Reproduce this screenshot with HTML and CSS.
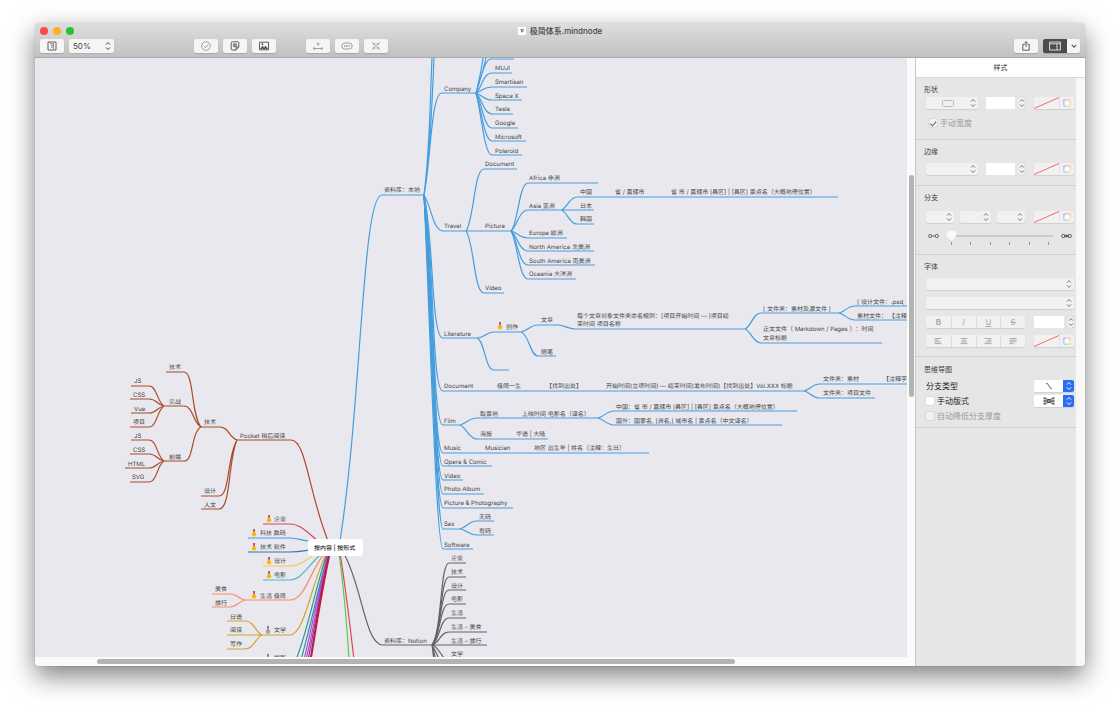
FILE: index.html
```html
<!DOCTYPE html>
<html lang="zh-CN">
<head>
<meta charset="utf-8">
<meta name="viewport" content="width=device-width, initial-scale=1">
<title>极简体系.mindnode</title>
<link rel="stylesheet" href="styles.css">
</head>
<body>
<svg class="defs" aria-hidden="true">
  <symbol id="updown" viewBox="0 0 6 10"><path d="M1 3.6 3 1.5l2 2.1M1 6.4l2 2.1 2-2.1"/></symbol>
  <symbol id="medal" viewBox="0 0 6 8"><path d="M1.900 0h2.200L3.800 3H2.200z" fill="#8d5aa8"/><path d="M2.600 0h.8v3h-.8z" fill="#e0574d"/><circle cx="3" cy="5.300" r="2.300" fill="#fbbf24"/><path d="M2.800 2.500v3.200h1.300" stroke="#e8a010" stroke-width=".8"/></symbol>
  <symbol id="silver" viewBox="0 0 6 8"><path d="M2 0h2L3.600 3H2.400z" fill="#9c5a9c"/><circle cx="3" cy="5.600" r="1.800" fill="#d4d4d8" stroke="#77777c" stroke-width=".7"/><path d="M3 3v3.400" stroke="#66666c" stroke-width=".7"/></symbol>
</svg>
<main class="window">
  <header class="titlebar">
    <div class="title-row">
      <div class="lights"><button class="light close" aria-label="关闭"></button><button class="light mini" aria-label="最小化"></button><button class="light full" aria-label="全屏"></button></div>
      <h1 class="doc-title"><svg class="doc-icon" viewBox="0 0 8 8" aria-hidden="true"><path fill="#fff" d="M0 0h8v8H0z"/><path d="M2 2h2v3z" fill="#3b8fd9"/><path d="M4 2h2L5 5z" fill="#e5533d"/><path d="M3 4h2L4 6z" fill="#49577a"/></svg>极简体系.mindnode</h1>
    </div>
    <div class="toolbar">
      <div class="tools">
        <button class="tool" aria-label="大纲"><svg viewBox="0 0 12 10"><path d="M2 1h8v8H2z"/><path d="M4 2.800h2.600M7.300 2v6M5.200 4.600h1.400M5.200 6.200h1.400" stroke-width=".8"/></svg></button>
        <span class="picker zoom"><select aria-label="缩放"><option>50%</option></select><svg class="arrows"><use href="#updown"/></svg></span>
      </div>
      <div class="tools middle">
        <button class="tool dim" aria-label="任务"><svg viewBox="0 0 12 10"><circle cx="6" cy="5" r="4.3"/><path d="m4 5 1.5 1.7L8.2 3.4"/></svg></button>
        <button class="tool" aria-label="贴纸"><svg viewBox="0 0 12 10"><path d="M3.200.8h5.600q1 0 1 1V6L7 9H3.200q-1 0-1-1V1.800q0-1 1-1zM9.800 6H7v3"/><path d="M4.300 2.800h3v2.800h-3zM5.800 2.800v2.800M4.300 4.200h3" stroke-width=".7"/></svg></button>
        <button class="tool" aria-label="图片"><svg viewBox="0 0 12 10"><path d="M1.500 1.200h9v7.600h-9z"/><path class="solid" d="m2 8 2.400-3.400L6 6.400l1.700-2 2.500 3.800zM3.600 2.300h1.600v1.600H3.600z"/></svg></button>
      </div>
      <div class="tools group">
        <button class="tool dim" aria-label="连接"><svg viewBox="0 0 12 10"><path d="M2.500 7.500h7M6 1.500v3M4.500 3h3"/><path class="solid" d="M1 6.500h2.200v2H1zM8.800 6.500H11v2H8.800z"/></svg></button>
        <button class="tool dim" aria-label="备注"><svg viewBox="0 0 12 10"><rect x=".8" y="2" width="10.400" height="6" rx="3"/><path d="M3 5h1.500M5.300 5h1.500M7.500 5H9" stroke-width="1.400"/></svg></button>
        <button class="tool dim" aria-label="折叠"><svg viewBox="0 0 12 10"><path d="m2 1 2.700 2.700M10 1 7.300 3.700M2 9l2.700-2.700M10 9 7.300 6.300M4.700 2v1.700H3M7.300 2v1.700H9M4.700 8V6.300H3M7.300 8V6.300H9"/><circle class="solid" cx="6" cy="5" r=".9"/></svg></button>
      </div>
      <div class="tools right">
        <button class="tool" aria-label="共享"><svg viewBox="0 0 12 10"><path d="M4.500 3.500H2.800v5.700h6.400V3.500H7.500M6 6V.8M4.300 2.400 6 .7l1.700 1.700"/></svg></button>
        <div class="split"><button class="tool dark" aria-label="检查器"><svg viewBox="0 0 12 10"><path d="M.6 1h10.800v8H.6zM.6 2.800h10.800M8 2.800V9"/></svg></button><button class="tool chevron" aria-label="面板菜单"><svg viewBox="0 0 8 6"><path d="m1.800 1.800 2.200 2.400 2.200-2.400"/></svg></button></div>
      </div>
    </div>
  </header>

  <div class="workspace">
    <section class="document" aria-label="思维导图画布">
      <div class="canvas">
        <svg class="map">
          <g transform="translate(-35 -58)">
            <g class="link blue">
              <path d="M340 541C362 400 362 195 382 195H424"/>
              <path d="M424 195C430 150 430 100 432 58M424 195C431 150 432 100 434 58"/>
              <path d="M424 195C431 160 431 93 442 93H476"/>
              <path d="M476 93C479 80 482 68 483 58M476 93C480 80 484 68 486 58M476 93C481 80 484 59 491 59H514"/>
              <path d="M476 93C482 88 483 73 492 73H512"/>
              <path d="M476 93C482 91 484 87 492 87H527"/>
              <path d="M476 93C482 95 484 100 492 100H522"/>
              <path d="M476 93C482 99 484 114 492 114H513"/>
              <path d="M476 93C482 103 484 128 492 128H518"/>
              <path d="M476 93C481 107 484 141 492 141H526"/>
              <path d="M476 93C481 110 484 155 492 155H522"/>
              <path d="M424 195C431 205 433 231 443 231H511"/>
              <path d="M466 231C474 220 474 169 484 169H517M466 231C474 242 474 293 484 293H504"/>
              <path d="M511 231C518 224 519 183 528 183H598"/>
              <path d="M511 231C517 227 519 210 528 210H561"/>
              <path d="M511 231C517 232 519 238 528 238H567"/>
              <path d="M511 231C517 235 519 251 528 251H594"/>
              <path d="M511 231C517 238 519 265 528 265H595"/>
              <path d="M511 231C517 240 519 279 528 279H576"/>
              <path d="M561 210C567 209 569 197 577 197H838M561 210H594M561 210C567 211 569 224 577 224H594"/>
              <path d="M424 195C434 240 431 338 443 338H477"/>
              <path d="M477 338C484 338 486 332 494 332H521M477 338C485 341 485 370 494 370H509"/>
              <path d="M521 332C528 331 530 325 538 325H558C564 325 568 329 575 329H745M521 332C529 334 530 356 538 356H556"/>
              <path d="M745 329C751 327 753 313 761 313H838M745 329C751 331 753 343 761 343H882"/>
              <path d="M838 313C844 313 847 306 855 306H1000M838 313C844 313 847 320 855 320H1000"/>
              <path d="M424 195C435 260 431 391 443 391H804"/>
              <path d="M804 391C810 390 812 384 820 384H1000M804 391C810 392 812 398 820 398H875"/>
              <path d="M424 195C434 270 432 425 443 425H460"/>
              <path d="M460 425C466 424 469 418 477 418H597M460 425C466 427 469 439 477 439H548"/>
              <path d="M597 418C603 418 606 411 614 411H797M597 418C603 418 606 425 614 425H782"/>
              <path d="M424 195C433 280 433 453 443 453H649"/>
              <path d="M424 195C433 285 434 466 443 466H492"/>
              <path d="M424 195C432 290 434 480 443 480H463"/>
              <path d="M424 195C432 295 435 494 443 494H484"/>
              <path d="M424 195C431 300 435 508 443 508H513"/>
              <path d="M424 195C431 310 436 529 443 529H460"/>
              <path d="M460 529C467 527 469 521 477 521H494M460 529C467 530 469 535 477 535H494"/>
              <path d="M424 195C430 320 436 549 443 549H473"/>
            </g>
            <g class="link rust">
              <path d="M328 541C308 490 306 440 291 440H236"/>
              <path d="M237 440C229 438 229 427 220 427H200M237 440C227 456 230 496 219 496H201M237 440C228 460 231 509 219 509H201"/>
              <path d="M201 427C191 415 194 372 184 372H166M201 427C193 423 193 406 184 406H163M201 427C191 432 194 461 184 461H163"/>
              <path d="M164 406C157 402 157 386 149 386H131M164 406C157 405 157 399 149 399H130M164 406C157 407 157 413 149 413H131M164 406C157 410 157 427 149 427H130"/>
              <path d="M164 461C157 457 157 440 149 440H131M164 461C157 460 157 454 149 454H130M164 461C157 462 157 468 149 468H125M164 461C157 465 157 482 149 482H130"/>
            </g>
            <path class="link red" d="M263 524H290C300 524 308 533 317 540M340 553C346 590 350 625 354 660"/>
            <path class="link blue" d="M248 538H290C298 538 303 541 309 541"/>
            <path class="link navy" d="M248 552H290C298 552 303 551 309 550"/>
            <path class="link yellow" d="M263 566H290C299 566 305 561 315 554"/>
            <path class="link teal" d="M263 580H290C301 580 308 566 321 554"/>
            <path class="link coral" d="M324 554C310 571 305 600 290 600H246C240 600 237 594 230 594H212M246 600C240 600 237 607 230 607H212"/>
            <path class="link gold" d="M327 553C313 576 305 635 290 635H227M262 635C256 633 254 621 245 621H227M262 635C256 637 254 649 245 649H227"/>
            <path class="link sea" d="M327 554C316 585 308 630 296 660M328 554C319 585 312 620 301 660"/>
            <path class="link violet" d="M328 554C319 590 311 630 304 660M329 554C320 590 313 630 306 660"/>
            <path class="link purple" d="M329 554C321 590 314 630 308 660"/>
            <path class="link crimson" d="M329 554C321 590 315 630 310 660M330 554C322 590 316 630 311 660"/>
            <path class="link green" d="M339 553C344 590 347 625 349 660"/>
            <g class="link gray">
              <path d="M344 554C362 585 365 645 383 645H432"/>
              <path d="M432 645C442 632 440 563 449 563H466"/>
              <path d="M432 645C442 634 440 577 449 577H466"/>
              <path d="M432 645C441 636 440 590 449 590H466"/>
              <path d="M432 645C440 638 440 604 449 604H466"/>
              <path d="M432 645C440 640 440 618 449 618H466"/>
              <path d="M432 645C440 643 440 632 449 632H487M432 645H487"/>
              <path d="M432 645C437 646 440 653 444 658M432 645C435 650 437 654 439 659M432 645 436 660M432 645 434 660"/>
            </g>
            <rect class="root" x="308" y="539" width="55" height="17" rx="3"/>
            <text class="root-label" x="314" y="550">按内容 | 按形式</text>
            <g class="label">
              <text x="495" y="70">MUJI</text><text x="495" y="84">Smartisan</text><text x="495" y="98">Space X</text><text x="495" y="111">Tesla</text><text x="495" y="125">Google</text><text x="495" y="139">Microsoft</text><text x="495" y="153">Polaroid</text>
              <text x="444" y="91">Company</text>
              <text x="384" y="192">资料库：本地</text>
              <text x="485" y="166">Document</text><text x="444" y="228">Travel</text><text x="485" y="228">Picture</text><text x="485" y="290">Video</text>
              <text x="529" y="180">Africa 非洲</text><text x="529" y="208">Asia 亚洲</text><text x="529" y="235">Europe 欧洲</text><text x="529" y="249">North America 北美洲</text><text x="529" y="263">South America 南美洲</text><text x="529" y="276">Oceania 大洋洲</text>
              <text x="580" y="194">中国</text><text x="580" y="208">日本</text><text x="580" y="221">韩国</text>
              <text x="615" y="194">省 / 直辖市</text><text x="671" y="194">省 市 / 直辖市 [县区] | [县区] 景点名（大概地理位置）</text>
              <text x="444" y="336">Literature</text><text x="506" y="329">创作</text><text x="541" y="322">文章</text><text x="541" y="354">随笔</text>
              <text x="577" y="318">每个文章对象文件夹命名规则：[项目开始时间 — ]项目结</text><text x="577" y="326">束时间 项目名称</text>
              <text x="763" y="311">[ 文件夹：素材及源文件 ]</text><text x="857" y="304">[ 设计文件：.psd,</text><text x="857" y="318">素材文件： 【注释</text>
              <text x="763" y="331">正文文件（ Markdown / Pages ）：时间</text><text x="763" y="340">文章标题</text>
              <text x="444" y="388">Document</text><text x="497" y="388">极简一生</text><text x="546" y="388">【找到出处】</text><text x="606" y="388">开始时间(立项时间) — 结束时间(发布时间)【找到出处】Vol.XXX 标题</text>
              <text x="823" y="381">文件夹：素材</text><text x="883" y="381">【注释字</text><text x="823" y="395">文件夹：项目文件</text>
              <text x="444" y="423">Film</text><text x="480" y="416">取景地</text><text x="522" y="416">上映时间 电影名（译名）</text>
              <text x="616" y="409">中国：省 市 / 直辖市 [县区] | [县区] 景点名（大概地理位置）</text><text x="616" y="423">国外：国家名, [洲名,] 城市名 | 景点名（中文译名）</text>
              <text x="480" y="436">海报</text><text x="516" y="436">华语 | 大陆</text>
              <text x="444" y="450">Music</text><text x="485" y="450">Musician</text><text x="534" y="450">地区 出生年 | 姓名（注释：生日）</text>
              <text x="444" y="464">Opera &amp; Comic</text><text x="444" y="478">Video</text><text x="444" y="491">Photo Album</text><text x="444" y="505">Picture &amp; Photography</text><text x="444" y="526">Sex</text><text x="479" y="519">无码</text><text x="479" y="533">有码</text><text x="444" y="547">Software</text>
              <text x="451" y="560">企业</text><text x="451" y="574">技术</text><text x="451" y="588">设计</text><text x="451" y="601">电影</text><text x="451" y="615">生活</text><text x="451" y="629">生活 – 美食</text><text x="451" y="643">生活 – 旅行</text><text x="451" y="656">文学</text>
              <text x="384" y="643">资料库：Notion</text>
              <text x="240" y="438">Pocket 稍后阅读</text><text x="204" y="424">技术</text><text x="204" y="493">设计</text><text x="204" y="507">人文</text>
              <text x="169" y="369">技术</text><text x="169" y="404">实战</text><text x="169" y="459">前端</text>
              <text x="134" y="383">JS</text><text x="133" y="397">CSS</text><text x="134" y="411">Vue</text><text x="133" y="424">项目</text>
              <text x="134" y="438">JS</text><text x="133" y="452">CSS</text><text x="128" y="466">HTML</text><text x="132" y="479">SVG</text>
              <text x="274" y="521">企业</text><text x="260" y="535">科技 数码</text><text x="260" y="549">技术 软件</text><text x="274" y="563">设计</text><text x="274" y="577">电影</text><text x="260" y="598">生活 极简</text><text x="274" y="632">文学</text><text x="274" y="660">摄影</text>
              <text x="215" y="591">美食</text><text x="215" y="605">旅行</text><text x="230" y="619">日语</text><text x="230" y="632">阅读</text><text x="230" y="646">写作</text>
            </g>
            <use href="#medal" x="497" y="322" width="6" height="8"/>
            <use href="#medal" x="266" y="515" width="6" height="8"/><use href="#medal" x="251" y="529" width="6" height="8"/><use href="#medal" x="251" y="543" width="6" height="8"/><use href="#medal" x="266" y="557" width="6" height="8"/><use href="#medal" x="266" y="571" width="6" height="8"/><use href="#medal" x="251" y="591" width="6" height="8"/>
            <use href="#silver" x="265" y="626" width="6" height="8"/><use href="#silver" x="265" y="654" width="6" height="8"/>
          </g>
        </svg>
      </div>
      <div class="scroll-y"><span class="thumb"></span></div>
      <div class="scroll-x"><span class="thumb"></span></div>
    </section>

    <aside class="inspector">
      <h2 class="inspector-title">样式</h2>
      <div class="inspector-body">
        <div class="panels">
          <section class="panel">
            <h3>形状</h3>
            <div class="row">
              <span class="picker wide"><select disabled aria-label="形状样式"><option></option></select><svg class="shape" viewBox="0 0 12 7"><rect x=".5" y=".5" width="11" height="6" rx="1"/></svg><svg class="arrows"><use href="#updown"/></svg></span>
              <input class="num" aria-label="形状宽度"><button class="stepper" aria-label="调整形状宽度"><svg><use href="#updown"/></svg></button>
              <span class="color"><button class="swatch" aria-label="填充颜色"><svg viewBox="0 0 25 12" preserveAspectRatio="none"><path d="M0 11.500 25 .5"/></svg></button><button class="wheel" aria-label="选择填充颜色"><i></i></button></span>
            </div>
            <label class="check muted indent"><input type="checkbox" checked disabled>手动宽度</label>
          </section>
          <section class="panel border-panel">
            <h3>边缘</h3>
            <div class="row">
              <span class="picker wide"><select disabled aria-label="边缘样式"><option></option></select><svg class="arrows"><use href="#updown"/></svg></span>
              <input class="num" aria-label="边缘宽度"><button class="stepper" aria-label="调整边缘宽度"><svg><use href="#updown"/></svg></button>
              <span class="color"><button class="swatch" aria-label="边缘颜色"><svg viewBox="0 0 25 12" preserveAspectRatio="none"><path d="M0 11.500 25 .5"/></svg></button><button class="wheel" aria-label="选择边缘颜色"><i></i></button></span>
            </div>
          </section>
          <section class="panel branch-panel">
            <h3>分支</h3>
            <div class="row branches">
              <span class="picker"><select disabled aria-label="线条样式"><option></option></select><svg class="arrows"><use href="#updown"/></svg></span>
              <span class="picker middle-picker"><select disabled aria-label="起点样式"><option></option></select><svg class="arrows"><use href="#updown"/></svg></span>
              <span class="picker"><select disabled aria-label="终点样式"><option></option></select><svg class="arrows"><use href="#updown"/></svg></span>
              <span class="color"><button class="swatch" aria-label="分支颜色"><svg viewBox="0 0 25 12" preserveAspectRatio="none"><path d="M0 11.500 25 .5"/></svg></button><button class="wheel" aria-label="选择分支颜色"><i></i></button></span>
            </div>
            <div class="slider-row">
              <svg class="end" viewBox="0 0 11 6"><circle cx="2.200" cy="3" r="1.600"/><circle cx="8.800" cy="3" r="1.600"/><path d="M3.800 3h3.400"/></svg>
              <div class="slider"><input type="range" min="0" max="5" value="0" aria-label="分支粗细"><div class="ticks"><i></i><i></i><i></i><i></i><i></i><i></i></div></div>
              <svg class="end" viewBox="0 0 11 6"><circle cx="2.200" cy="3" r="1.600"/><circle cx="8.800" cy="3" r="1.600"/><path d="M3 3h5" stroke-width="2.400"/></svg>
            </div>
          </section>
          <section class="panel font-panel">
            <h3>字体</h3>
            <div class="row"><span class="picker fill"><select disabled aria-label="字体"><option></option></select><svg class="arrows"><use href="#updown"/></svg></span></div>
            <div class="row"><span class="picker fill"><select disabled aria-label="字形"><option></option></select><svg class="arrows"><use href="#updown"/></svg></span></div>
            <div class="row">
              <div class="segments"><button><b>B</b></button><button><em>I</em></button><button><u>U</u></button><button><s>S</s></button></div>
              <span class="size"><input class="num" aria-label="字号"><button class="stepper" aria-label="调整字号"><svg><use href="#updown"/></svg></button></span>
            </div>
            <div class="row">
              <div class="segments">
                <button aria-label="左对齐"><svg viewBox="0 0 8 8"><path d="M.5 1.500h7M.5 3.200h4M.5 4.900h6M.5 6.600h7"/></svg></button>
                <button aria-label="居中"><svg viewBox="0 0 8 8"><path d="M.5 1.500h7M2 3.200h4M1 4.900h6M.5 6.600h7"/></svg></button>
                <button aria-label="右对齐"><svg viewBox="0 0 8 8"><path d="M.5 1.500h7M3.500 3.200h4M1.500 4.900h6M.5 6.600h7"/></svg></button>
                <button aria-label="两端对齐"><svg viewBox="0 0 8 8"><path d="M.5 1.500h7M.5 3.200h7M.5 4.900h7M.5 6.600h4"/></svg></button>
              </div>
              <span class="color"><button class="swatch" aria-label="文字颜色"><svg viewBox="0 0 25 12" preserveAspectRatio="none"><path d="M0 11.500 25 .5"/></svg></button><button class="wheel" aria-label="选择文字颜色"><i></i></button></span>
            </div>
          </section>
          <section class="panel map-panel">
            <h3>思维导图</h3>
            <div class="row"><label for="branch-type">分支类型</label><span class="picker blue-picker"><select id="branch-type"><option></option></select><svg class="glyph" viewBox="0 0 14 8"><path d="M4 1.500c4 0 2 5 6 5"/></svg><svg class="arrows"><use href="#updown"/></svg></span></div>
            <div class="row"><label class="check"><input type="checkbox">手动版式</label><span class="picker blue-picker"><select aria-label="版式"><option></option></select><svg class="glyph" viewBox="0 0 14 8"><path d="M1 1h3l1 1.500h4L10 1h3M1 7h3l1-1.500h4L10 7h3M1 4h12M3 1v6M11 1v6"/><rect x="5" y="2.800" width="4" height="2.400" rx="1"/></svg><svg class="arrows"><use href="#updown"/></svg></span></div>
            <div class="row"><label class="check muted"><input type="checkbox" disabled>自动降低分支厚度</label></div>
          </section>
        </div>
      </div>
    </aside>
  </div>
</main>
</body>
</html>
```

FILE: styles.css
```css
* { box-sizing: border-box; }

body {
  margin: 0;
  min-height: 100vh;
  padding: 23px 35px 46px;
  background: #fff;
  color: #333;
  font-family: Inter, "Noto Sans CJK SC", sans-serif;
  font-size: 8px;
  line-height: 12px;
  text-spacing-trim: space-all;
}

.defs { position: absolute; width: 0; height: 0; }
svg { display: block; fill: none; stroke: currentColor; }
button, input, select {
  margin: 0;
  padding: 0;
  border: 0;
  border-radius: 0;
  background: none;
  color: inherit;
  font: inherit;
  appearance: none;
}
button { display: grid; place-items: center; }
h1, h2, h3 { margin: 0; font-weight: 400; }

.window {
  display: flex;
  flex-direction: column;
  height: calc(100vh - 69px);
  border-radius: 4px;
  overflow: hidden;
  background: #e6e6e6;
  box-shadow: 0 0 1px rgba(0, 0, 0, .4), 0 10px 26px rgba(0, 0, 0, .5);
}

/* Title bar */
.titlebar {
  flex: none;
  padding: 0 5px 4px;
  border-bottom: 1px solid #aaa;
  background: linear-gradient(#dedede, #c1c1c1);
}
.title-row {
  display: grid;
  grid-template-columns: 1fr auto 1fr;
  align-items: center;
  height: 16px;
}
.lights { display: flex; gap: 5px; }
.light { width: 8px; height: 8px; border-radius: 50%; }
.close { background: #fc4a48; }
.mini { background: #fdb225; }
.full { background: #2bc232; }
.doc-title { display: flex; align-items: center; gap: 4px; font-size: 8px; font-weight: 500; color: #444; }
.doc-icon { width: 8px; height: 8px; stroke: none; }
.toolbar { display: flex; }
.tools { display: flex; gap: 5px; }
.middle { margin-left: 80px; }
.group { margin-left: 30px; }
.right { margin-left: auto; }
.tool {
  width: 24px;
  height: 14px;
  border-radius: 2px;
  background: #f5f5f5;
  box-shadow: 0 1px 1px rgba(0, 0, 0, .15);
  color: #5c5c5c;
}
.tool svg { width: 12px; height: 10px; }
.tool .solid { fill: currentColor; stroke: none; }
.tool.dim { color: #a0a0a0; }
.split { display: flex; }
.tool.dark { border-radius: 2px 0 0 2px; background: #4c4c4c; color: #ddd; }
.tool.chevron { width: 13px; border-radius: 0 2px 2px 0; }
.tool.chevron svg { width: 8px; height: 6px; stroke-width: 1.2; }

/* Pop-up buttons: select, preview glyph and arrows share one cell */
.picker { display: grid; width: 28px; height: 12px; color: #777; }
.picker > * { grid-area: 1 / 1; align-self: center; pointer-events: none; }
.picker select {
  align-self: stretch;
  width: 100%;
  min-width: 0;
  border-radius: 2px;
  background: #f1f1f1;
  box-shadow: 0 1px 1px rgba(0, 0, 0, .1);
  pointer-events: auto;
  opacity: 1;
}
.arrows { justify-self: end; width: 6px; height: 10px; margin-right: 2px; }
.picker.zoom { width: 45px; height: 14px; color: #444; }
.picker.zoom select { padding-left: 4px; background: #f5f5f5; }
.zoom .arrows { margin-right: 3px; }
.picker.wide { width: 52px; }
.picker.middle-picker { width: 31px; }
.fill { flex: 1; }
.shape { justify-self: center; width: 12px; height: 7px; margin-right: 8px; color: #bbb; }
.picker.blue-picker { width: 40px; margin-left: auto; }
.picker.blue-picker select { background: linear-gradient(90deg, #fff 29px, #2b6ef5 29px); }
.blue-picker .arrows { color: #fff; }
.glyph { width: 14px; height: 8px; margin-left: 8px; color: #333; stroke-width: .8; }

/* Workspace */
.workspace { display: flex; flex: 1; min-height: 0; }
.document {
  display: grid;
  grid-template: minmax(0, 1fr) 9px / minmax(0, 1fr) 8px;
  flex: 1;
  min-width: 0;
  background: #fafafa;
}
.canvas { overflow: hidden; background: #e9e8ee; }
.map { width: 100%; height: 100%; }
.scroll-y { display: grid; grid-template-rows: 117fr 222fr 260fr; padding: 0 1px 0 2px; }
.scroll-y .thumb { grid-row: 2; }
.scroll-x { display: grid; grid-column: 1 / 3; grid-template-columns: 62fr 638fr 180fr; padding: 2px 0; }
.scroll-x .thumb { grid-column: 2; }
.thumb { border-radius: 3px; background: #b3b3b3; }

/* Mind map */
.link { stroke-width: 1.2; }
.blue { stroke: #459ddd; }
.rust { stroke: #ac4a2c; }
.red { stroke: #dc4258; }
.navy { stroke: #2f76b5; }
.yellow { stroke: #f3c950; }
.teal { stroke: #4fbac4; }
.coral { stroke: #fa8c64; }
.gold { stroke: #cfa42f; }
.sea { stroke: #319397; }
.violet { stroke: #ad4fd0; }
.purple { stroke: #8a35b8; }
.crimson { stroke: #c01c3c; }
.green { stroke: #57cb43; }
.gray { stroke: #636367; }
.map text { stroke: none; font-size: 6px; text-rendering: geometricPrecision; white-space: pre; }
.label { fill: #444; }
.map .root { fill: #fff; stroke: none; }
.map .root-label { fill: #222; font-weight: 500; }
#medal path:not([stroke]), #medal circle, #silver path:not([stroke]) { stroke: none; }

/* Inspector */
.inspector {
  display: flex;
  flex: none;
  flex-direction: column;
  width: 170px;
  border-left: 1px solid #c8c8c8;
}
.inspector-title {
  height: 20px;
  border-bottom: 1px solid #d8d8d8;
  background: #fff;
  font-size: 7px;
  line-height: 20px;
  text-align: center;
}
.inspector-body {
  flex: 1;
  min-height: 0;
  padding-right: 9px;
  background: linear-gradient(270deg, #f8f8f8 9px, #e6e6e6 9px);
}
.panel { padding: 7px 2px 10px 10px; border-bottom: 1px solid #d0d0d0; }
.panel h3 { margin: 0 0 3px -2px; font-size: 7px; line-height: 9px; color: #3c3c3c; }
.row { display: flex; }
.num { width: 29px; height: 12px; margin-left: 8px; background: #fff; }
.stepper { width: 7px; height: 12px; margin-left: 3px; border-radius: 3px; background: #f1f1f1; color: #777; box-shadow: 0 0 1px rgba(0, 0, 0, .3); }
.stepper svg { width: 6px; height: 10px; }
.color { display: flex; width: 40px; height: 12px; margin-left: auto; border-radius: 2px; background: #f1f1f1; box-shadow: 0 1px 1px rgba(0, 0, 0, .1); }
.swatch { width: 26px; height: 12px; border-right: 1px solid #e2e2e2; }
.swatch svg { width: 25px; height: 12px; color: #fa6468; }
.wheel { width: 14px; height: 12px; }
.wheel i {
  width: 8px;
  height: 8px;
  border-radius: 2px;
  background: radial-gradient(#fff 20%, transparent 70%), conic-gradient(#f3b9dc, #f8cba8, #f2ecab, #b4e6b8, #a9dcee, #c0b6ee, #f3b9dc);
}
.check { display: flex; align-items: center; gap: 3px; height: 12px; }
.check input { display: grid; place-items: center; width: 8px; height: 8px; border-radius: 1px; background: #fff; box-shadow: 0 0 1px rgba(0, 0, 0, .5); }
.check input:disabled { background: #f2f2f2; }
.check input:checked::after { content: ""; width: 3px; height: 5px; margin-bottom: 1px; border: solid #666; border-width: 0 1px 1px 0; transform: rotate(40deg); }
.muted { color: #9a9a9a; }
.indent { margin: 8px 0 0 3px; }
.border-panel h3 { margin-bottom: 7px; }

.branch-panel { padding-bottom: 8px; }
.branch-panel h3 { margin-bottom: 9px; }
.branches { gap: 6px; }
.slider-row { display: flex; justify-content: space-between; height: 16px; margin: 7px 2px 0; }
.end { width: 11px; height: 6px; margin-top: 3px; color: #666; }
.slider { width: 106px; }
.slider input { display: block; width: 100%; height: 11px; background: linear-gradient(#c9c9c9, #c9c9c9) center 5px / 100% 2px no-repeat; }
.slider input::-webkit-slider-thumb {
  width: 9px;
  height: 10px;
  appearance: none;
  border-radius: 2px;
  background: #fafafa;
  clip-path: polygon(0 0, 100% 0, 100% 60%, 50% 100%, 0 60%);
}
.ticks { display: flex; justify-content: space-between; margin: 1px 4px 0; }
.ticks i { width: 1px; height: 3px; background: #999; }

.font-panel { display: grid; gap: 7px; padding-bottom: 9px; }
.font-panel h3 { margin-bottom: 0; }
.segments { display: grid; grid-template-columns: repeat(4, 1fr); width: 99px; height: 12px; border-radius: 2px; background: #f1f1f1; color: #aaa; box-shadow: 0 1px 1px rgba(0, 0, 0, .1); }
.segments button + button { border-left: 1px solid #ddd; }
.segments svg { width: 8px; height: 8px; }
.size { display: flex; margin-left: auto; }
.size .num { width: 30px; }

.map-panel { display: grid; gap: 3px; padding-top: 8px; padding-bottom: 5px; color: #222; }
.map-panel h3 { margin-bottom: 3px; }
.map-panel .muted { color: #9a9a9a; }
```
